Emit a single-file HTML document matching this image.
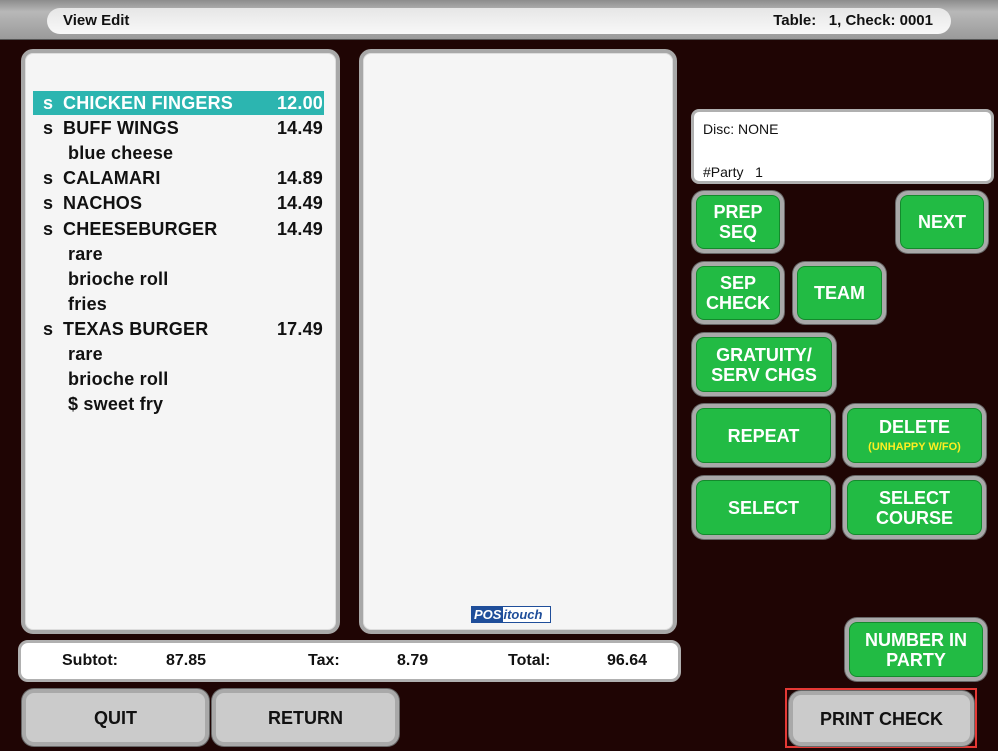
<!DOCTYPE html>
<html><head><meta charset="utf-8"><style>
*{margin:0;padding:0;box-sizing:border-box}
body{width:998px;height:751px;background:#1f0504;position:relative;overflow:hidden;font-family:"Liberation Sans",Arial,sans-serif;font-weight:bold}
.a{position:absolute}
.top{left:0;top:0;width:998px;height:40px;background:linear-gradient(#8c8c8c,#b8b8b8 30%,#9a9a9a);border-bottom:1px solid #555}
.pill{left:47px;top:8px;width:904px;height:26px;border-radius:13px;background:linear-gradient(#e6e6e6,#f8f8f8);font-size:15px;color:#111;line-height:26px}
.panel{background:#f5f5f5;border:4px solid #a8a8a8;border-radius:12px;box-shadow:inset 0 0 0 1px #ddd}
.btn{background:#22bb44;border:4px solid #a9a9a9;border-radius:12px;box-shadow:0 0 0 1px #666,inset 0 0 0 1px #138a2c;color:#fff;font-size:18px;text-align:center;display:flex;flex-direction:column;justify-content:center;line-height:20px}
.gray{background:#cbcbcb;color:#111;box-shadow:0 0 0 1px #666}
.row{position:absolute;left:33px;width:291px;height:24px;font-size:18px;color:#111;line-height:24px;letter-spacing:0.2px}
.row .s{position:absolute;left:10px}.row .n{position:absolute;left:30px}.row .p{position:absolute;right:1px}
.row .m{position:absolute;left:35px}
</style></head><body>
<div class="a top"></div>
<div class="a pill"><span class="a" style="left:16px">View Edit</span><span class="a" style="right:18px">Table:&nbsp;&nbsp;&nbsp;1, Check: 0001</span></div>

<div class="a panel" style="left:21px;top:49px;width:319px;height:585px"></div>
<div class="row" style="top:91px;background:#2cb5b0;color:#fff"><span class="s">s</span><span class="n">CHICKEN FINGERS</span><span class="p">12.00</span></div>
<div class="row" style="top:116px"><span class="s">s</span><span class="n">BUFF WINGS</span><span class="p">14.49</span></div>
<div class="row" style="top:141px"><span class="m">blue cheese</span></div>
<div class="row" style="top:166px"><span class="s">s</span><span class="n">CALAMARI</span><span class="p">14.89</span></div>
<div class="row" style="top:191px"><span class="s">s</span><span class="n">NACHOS</span><span class="p">14.49</span></div>
<div class="row" style="top:217px"><span class="s">s</span><span class="n">CHEESEBURGER</span><span class="p">14.49</span></div>
<div class="row" style="top:242px"><span class="m">rare</span></div>
<div class="row" style="top:267px"><span class="m">brioche roll</span></div>
<div class="row" style="top:292px"><span class="m">fries</span></div>
<div class="row" style="top:317px"><span class="s">s</span><span class="n">TEXAS BURGER</span><span class="p">17.49</span></div>
<div class="row" style="top:342px"><span class="m">rare</span></div>
<div class="row" style="top:367px"><span class="m">brioche roll</span></div>
<div class="row" style="top:392px"><span class="m">$ sweet fry</span></div>

<div class="a panel" style="left:359px;top:49px;width:318px;height:585px"></div>
<div class="a" style="left:471px;top:606px;width:80px;height:17px;border:1px solid #1f4e9a;font-size:13px;font-style:italic;line-height:15px;background:#fff;color:#1f4e9a;white-space:nowrap"><span style="background:#1f4e9a;color:#fff;padding:0 2px">POS</span>itouch</div>

<div class="a" style="left:691px;top:109px;width:303px;height:75px;background:#fff;border:3px solid #b0b0b0;border-radius:8px;font-weight:normal;font-size:14px;color:#111">
<div class="a" style="left:9px;top:9px">Disc: NONE</div><div class="a" style="left:9px;top:52px">#Party&nbsp;&nbsp;&nbsp;1</div></div>

<div class="a btn" style="left:692px;top:191px;width:92px;height:62px">PREP<br>SEQ</div>
<div class="a btn" style="left:896px;top:191px;width:92px;height:62px">NEXT</div>
<div class="a btn" style="left:692px;top:262px;width:92px;height:62px">SEP<br>CHECK</div>
<div class="a btn" style="left:793px;top:262px;width:93px;height:62px">TEAM</div>
<div class="a btn" style="left:692px;top:333px;width:144px;height:63px">GRATUITY/<br>SERV CHGS</div>
<div class="a btn" style="left:692px;top:404px;width:143px;height:63px">REPEAT</div>
<div class="a btn" style="left:843px;top:404px;width:143px;height:63px">DELETE<span style="color:#ffee22;font-size:11px;line-height:14px;margin-top:3px">(UNHAPPY W/FO)</span></div>
<div class="a btn" style="left:692px;top:476px;width:143px;height:63px">SELECT</div>
<div class="a btn" style="left:843px;top:476px;width:143px;height:63px">SELECT<br>COURSE</div>
<div class="a btn" style="left:845px;top:618px;width:142px;height:63px">NUMBER IN<br>PARTY</div>

<div class="a" style="left:18px;top:640px;width:663px;height:42px;background:#fff;border:3px solid #b0b0b0;border-radius:10px;font-size:16px;color:#111;line-height:36px">
<span class="a" style="left:41px">Subtot:</span><span class="a" style="left:145px">87.85</span>
<span class="a" style="left:287px">Tax:</span><span class="a" style="left:376px">8.79</span>
<span class="a" style="left:487px">Total:</span><span class="a" style="left:586px">96.64</span></div>

<div class="a btn gray" style="left:22px;top:689px;width:187px;height:57px">QUIT</div>
<div class="a btn gray" style="left:212px;top:689px;width:187px;height:57px">RETURN</div>
<div class="a" style="left:785px;top:688px;width:192px;height:60px;border:2px solid #e53935"></div>
<div class="a btn gray" style="left:789px;top:691px;width:185px;height:55px">PRINT CHECK</div>
</body></html>
